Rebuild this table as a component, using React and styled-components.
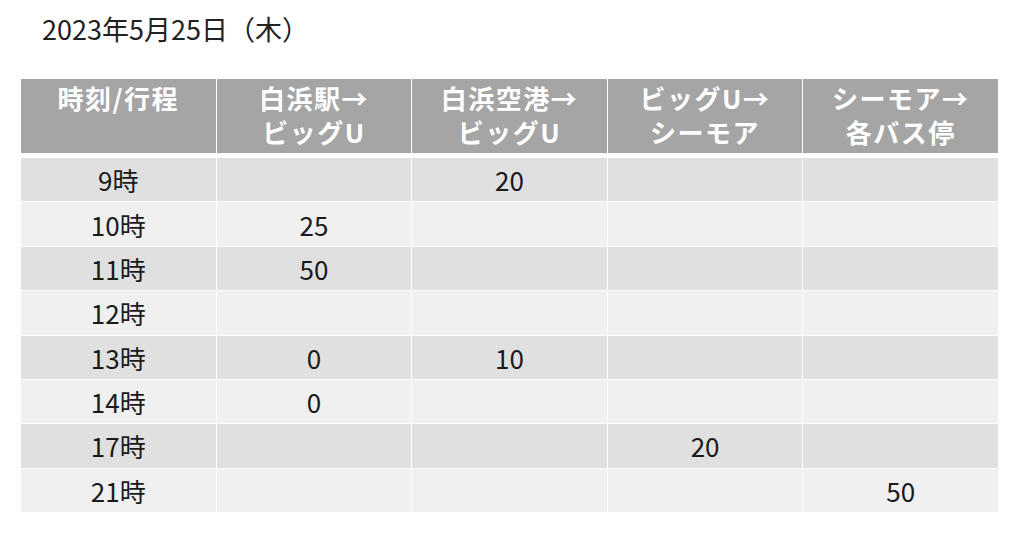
import React from 'react';
import styled, { createGlobalStyle } from 'styled-components';

const GlobalStyle = createGlobalStyle`
  html, body {
    margin: 0;
    padding: 0;
    background: #ffffff;
  }
  body {
    font-family: "Noto Sans CJK JP", "Noto Sans", sans-serif;
    color: #1a1a1a;
  }
`;

const columns = [
  ['時刻/行程'],
  ['白浜駅→', 'ビッグU'],
  ['白浜空港→', 'ビッグU'],
  ['ビッグU→', 'シーモア'],
  ['シーモア→', '各バス停'],
];

const rows = [
  ['9時', '', '20', '', ''],
  ['10時', '25', '', '', ''],
  ['11時', '50', '', '', ''],
  ['12時', '', '', '', ''],
  ['13時', '0', '10', '', ''],
  ['14時', '0', '', '', ''],
  ['17時', '', '', '20', ''],
  ['21時', '', '', '', '50'],
];

export default function App() {
  return (
    <Page>
      <GlobalStyle />
      <Title>2023年5月25日（木）</Title>
      <Table>
        <HeadRow>
          {columns.map((lines, i) => (
            <HeadCell key={i}>
              {lines.map((l) => (
                <span key={l}>{l}</span>
              ))}
            </HeadCell>
          ))}
        </HeadRow>
        <Body>
          {rows.map((row, r) => (
            <Row key={r}>
              {row.map((v, c) => (
                <Cell key={c} $dark={r % 2 === 0}>
                  {v}
                </Cell>
              ))}
            </Row>
          ))}
        </Body>
      </Table>
    </Page>
  );
}

const Page = styled.div`
  width: 1024px;
  height: 539px;
  overflow: hidden;
`;

const Title = styled.div`
  padding: 12px 0 0 42px;
  height: 79px;
  box-sizing: border-box;
  font-size: 27px;
  line-height: 34px;
  color: #222222;
`;

const Table = styled.div`
  width: 977px;
  margin-left: 21px;
  background: #ffffff;
`;

const HeadRow = styled.div`
  display: grid;
  grid-template-columns: repeat(5, 1fr);
  column-gap: 1px;
  height: 74px;
`;

const HeadCell = styled.div`
  background: #a5a5a5;
  color: #ffffff;
  font-weight: 700;
  font-size: 26px;
  letter-spacing: 1.5px;
  line-height: 34px;
  padding-top: 2px;
  display: flex;
  flex-direction: column;
  align-items: center;
  span {
    display: block;
    white-space: nowrap;
  }
`;

const Body = styled.div`
  margin-top: 5px;
  display: flex;
  flex-direction: column;
  row-gap: 1px;
`;

const Row = styled.div`
  display: grid;
  grid-template-columns: repeat(5, 1fr);
  column-gap: 1px;
  height: 43.375px;
`;

const Cell = styled.div`
  background: ${(p) => (p.$dark ? '#e0e0e0' : '#f0f0f0')};
  display: flex;
  align-items: center;
  justify-content: center;
  font-size: 26px;
  color: #1a1a1a;
`;
